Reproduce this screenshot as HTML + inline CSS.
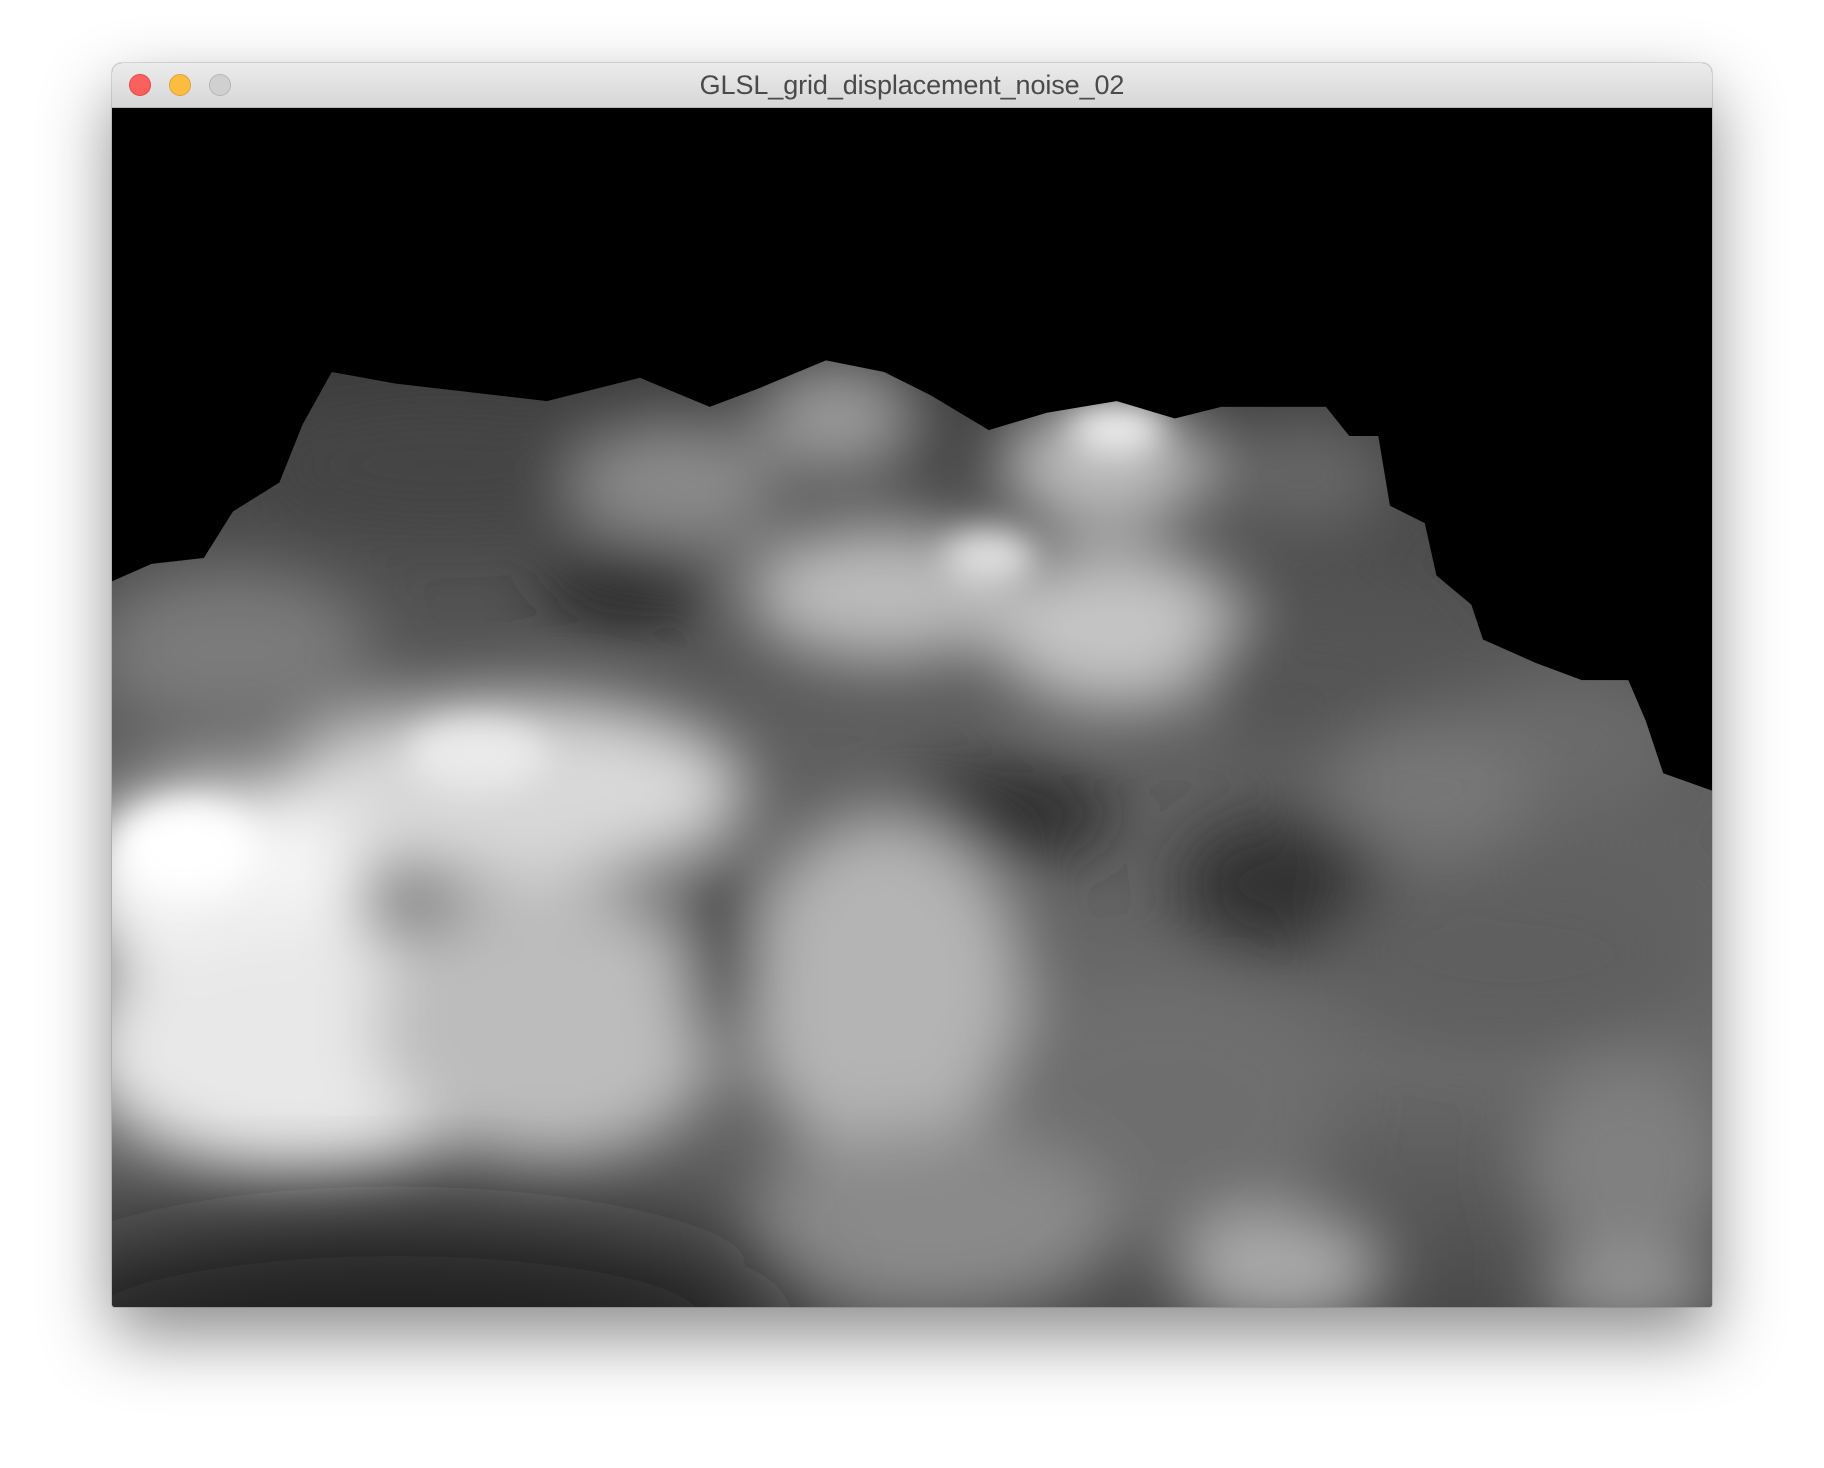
<!DOCTYPE html>
<html><head><meta charset="utf-8"><style>
html,body{margin:0;padding:0;background:#fff;width:1824px;height:1468px;overflow:hidden}
.win{position:absolute;left:112px;top:63px;width:1600px;height:1244px;border-radius:10px 10px 3px 3px;box-shadow:0 30px 70px rgba(0,0,0,0.45),0 0 0 1px rgba(0,0,0,0.12);overflow:hidden;background:#000}
.tb{position:absolute;left:0;top:0;width:1600px;height:44px;background:linear-gradient(#ececec,#d6d6d6);border-bottom:1px solid #b9b9b9}
.dot{position:absolute;top:11px;width:22px;height:22px;border-radius:50%;box-sizing:border-box}
.t{position:absolute;left:0;right:0;top:7px;text-align:center;font:27px "Liberation Sans",sans-serif;color:#4a4a4a;letter-spacing:-0.1px}
svg{position:absolute;left:0;top:45px}
</style></head><body>
<div class="win">
<div class="tb">
<div class="dot" style="left:17px;background:#fc605c;border:1px solid #de4a45"></div>
<div class="dot" style="left:57px;background:#fdbc40;border:1px solid #dea236"></div>
<div class="dot" style="left:97px;background:#d0d0d0;border:1px solid #b5b5b5"></div>
<div class="t">GLSL_grid_displacement_noise_02</div>
</div>
<svg width="1600" height="1199" viewBox="96 93 1376 1031" preserveAspectRatio="none">
<defs>
<clipPath id="c"><polygon points="96,500 130,485 175,480 200,440 240,415 260,365 285,320 340,330 470,345 550,325 610,350 650,335 710,310 760,320 800,340 850,370 900,355 960,345 1010,360 1050,350 1140,350 1160,375 1185,375 1195,435 1225,450 1235,495 1265,520 1275,550 1320,570 1360,585 1400,585 1415,620 1430,665 1472,680 1472,1124 96,1124"/></clipPath>
<filter id="b" x="-50%" y="-50%" width="200%" height="200%"><feGaussianBlur stdDeviation="28"/></filter>
<filter id="b2" x="-50%" y="-50%" width="200%" height="200%"><feGaussianBlur stdDeviation="14"/></filter>
<filter id="b3" x="-50%" y="-50%" width="200%" height="200%"><feGaussianBlur stdDeviation="45"/></filter>
<linearGradient id="g" x1="0" y1="0" x2="0" y2="1">
<stop offset="0" stop-color="#3a3a3a"/><stop offset="0.4" stop-color="#5e5e5e"/><stop offset="0.75" stop-color="#6a6a6a"/><stop offset="1" stop-color="#4a4a4a"/></linearGradient>
</defs>
<rect x="96" y="93" width="1376" height="1031" fill="#000"/>
<g clip-path="url(#c)">
<rect x="96" y="300" width="1376" height="824" fill="url(#g)"/>
<g filter="url(#b)">
<ellipse cx="380" cy="400" rx="160" ry="50" fill="#444"/>
<ellipse cx="580" cy="420" rx="90" ry="60" fill="#8a8a8a"/>
<ellipse cx="720" cy="360" rx="70" ry="50" fill="#9a9a9a"/>
<ellipse cx="950" cy="400" rx="90" ry="55" fill="#bdbdbd"/>
<ellipse cx="1120" cy="410" rx="80" ry="50" fill="#666"/>
<ellipse cx="200" cy="560" rx="120" ry="70" fill="#7a7a7a"/>
<ellipse cx="540" cy="500" rx="70" ry="35" fill="#222"/>
<ellipse cx="760" cy="510" rx="120" ry="60" fill="#bbb"/>
<ellipse cx="960" cy="540" rx="110" ry="70" fill="#c4c4c4"/>
<ellipse cx="1130" cy="580" rx="100" ry="60" fill="#555"/>
<ellipse cx="1350" cy="640" rx="90" ry="60" fill="#6a6a6a"/>
<ellipse cx="860" cy="700" rx="100" ry="40" fill="#2a2a2a"/>
<ellipse cx="440" cy="680" rx="200" ry="80" fill="#d8d8d8"/>
<ellipse cx="190" cy="760" rx="130" ry="90" fill="#f4f4f4"/>
<ellipse cx="260" cy="900" rx="190" ry="110" fill="#e8e8e8"/>
<ellipse cx="470" cy="880" rx="150" ry="120" fill="#bcbcbc"/>
<ellipse cx="760" cy="850" rx="120" ry="150" fill="#b4b4b4"/>
<ellipse cx="620" cy="820" rx="30" ry="90" fill="#333"/>
<ellipse cx="1230" cy="680" rx="90" ry="60" fill="#777"/>
<ellipse cx="1100" cy="760" rx="90" ry="60" fill="#333"/>
<ellipse cx="1300" cy="820" rx="160" ry="80" fill="#5e5e5e"/>
<ellipse cx="1000" cy="950" rx="150" ry="110" fill="#6e6e6e"/>
<ellipse cx="1400" cy="1000" rx="90" ry="90" fill="#808080"/>
<ellipse cx="1100" cy="1090" rx="90" ry="50" fill="#aaa"/>
<ellipse cx="800" cy="1050" rx="160" ry="80" fill="#8a8a8a"/>
<ellipse cx="1400" cy="1110" rx="80" ry="30" fill="#999"/>
</g>
<g filter="url(#b2)">
<ellipse cx="160" cy="730" rx="60" ry="40" fill="#fff"/>
<ellipse cx="960" cy="370" rx="40" ry="20" fill="#eee"/>
<ellipse cx="850" cy="480" rx="40" ry="25" fill="#ddd"/>
<ellipse cx="410" cy="650" rx="60" ry="30" fill="#eaeaea"/>
</g>
<g filter="url(#b3)">
<ellipse cx="340" cy="1140" rx="330" ry="90" fill="#1a1a1a" opacity="0.85"/>
</g>
</g>
</svg>
</div>
</body></html>
